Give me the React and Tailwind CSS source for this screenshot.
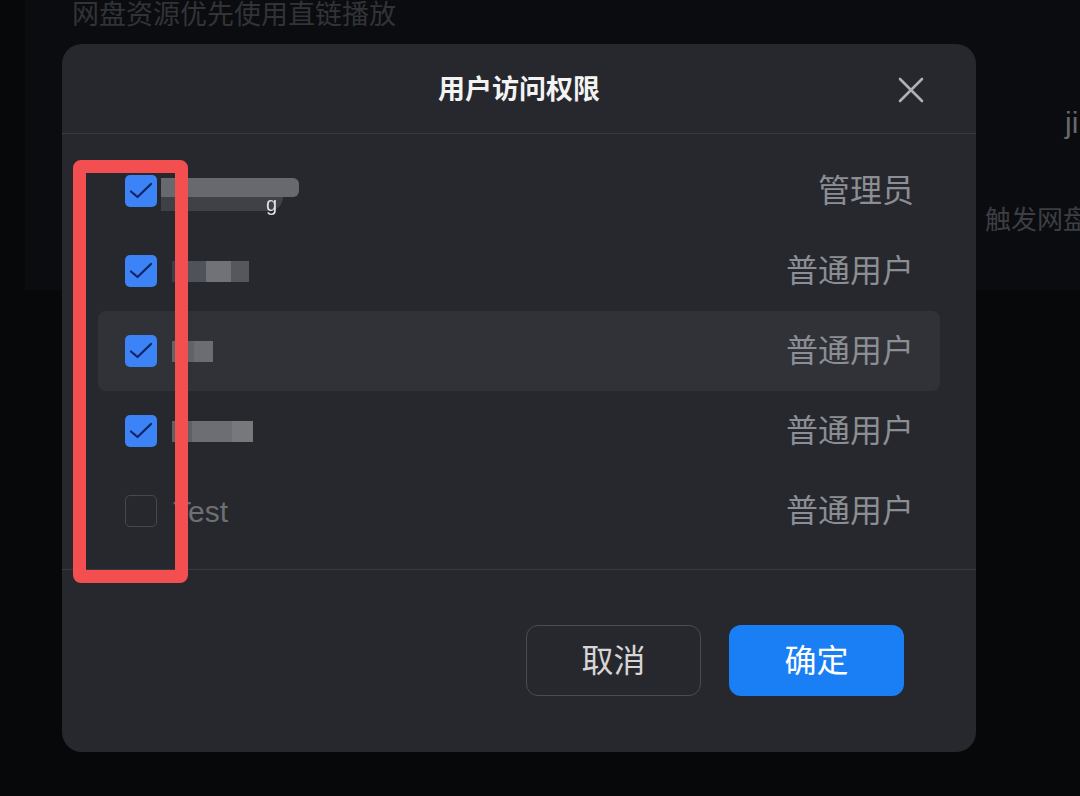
const USERS = [
  { id: 1, checked: true, role: '管理员', g: true },
  { id: 2, checked: true, role: '普通用户', blur: [['#3b3e4a', 14], ['#505259', 20], ['#707277', 25], ['#55575c', 18]] },
  { id: 3, checked: true, role: '普通用户', blur: [['#616368', 22], ['#6b6d72', 19]], active: true },
  { id: 4, checked: true, role: '普通用户', blur: [['#5e6065', 20], ['#6c6e73', 40], ['#76787c', 21]] },
  { id: 5, checked: false, role: '普通用户', name: 'Test' },
];

function Box({ checked }) {
  if (!checked) {
    return <div className="w-8 h-8 shrink-0 rounded-[5px] border-[1.5px] border-[#46484e]" />;
  }
  return (
    <div className="w-8 h-8 shrink-0 rounded-[5px] bg-[#3b83f6] flex items-center justify-center">
      <svg width="32" height="32" viewBox="0 0 32 32" fill="none">
        <path d="M6 16.5 12.5 22 26 9" stroke="#13235e" strokeWidth="2.2" strokeLinecap="round" strokeLinejoin="round" />
      </svg>
    </div>
  );
}

function Row({ u }) {
  return (
    <div className={`h-20 flex items-center pl-[27px] pr-[26px] rounded-lg ${u.active ? 'bg-[#303238]' : ''}`}>
      <Box checked={u.checked} />
      {u.name ? (
        <span className="ml-[16px] text-[30px] text-[#6c6f74]">{u.name}</span>
      ) : u.g ? (
        <div className="ml-[4px] mt-[6px] flex flex-col w-[138px] blur-[0.6px]">
          <div className="h-[19px] bg-[#67696e] rounded-r-md" />
          <div className="h-[14px] w-[122px] bg-[#3f4146] rounded-br-2xl flex justify-end items-end pr-[6px]">
            <span className="text-[20px] leading-none text-[#e0e0e0] -mb-[3px]">g</span>
          </div>
        </div>
      ) : (
        <div className="ml-[15px] flex h-[21px] blur-[0.4px]">
          {u.blur.map(([c, w], i) => (
            <div key={i} className="h-full" style={{ background: c, width: w }} />
          ))}
        </div>
      )}
      <span className="ml-auto text-[32px] text-[#8b8e93]">{u.role}</span>
    </div>
  );
}

export default function App() {
  return (
    <div className="relative w-[1080px] h-[796px] overflow-hidden bg-[#07080a] font-['Liberation_Sans','Noto_Sans_CJK_SC',sans-serif]">
      {/* page behind the mask */}
      <div className="ml-[25px] h-[290px] bg-[#0b0c0f] flex">
        <div className="pl-[47px] -mt-[5px] text-[27px] text-[#313337] whitespace-nowrap">网盘资源优先使用直链播放</div>
        <div className="ml-auto w-[95px] shrink-0 flex flex-col">
          <span className="mt-[100px] pl-[80px] text-[30px] text-[#66686d]">ji</span>
          <span className="mt-[56px] text-[26px] text-[#3c3e43] whitespace-nowrap">触发网盘</span>
        </div>
      </div>

      {/* dialog */}
      <div className="absolute left-[62px] top-[44px] w-[914px] h-[708px] rounded-[20px] bg-[#26282e] flex flex-col">
        <div className="relative h-[90px] shrink-0 flex items-center justify-center border-b border-[#383a40]">
          <span className="mt-[3px] text-[27px] font-bold text-[#f3f3f3]">用户访问权限</span>
          <button className="absolute right-[52px] top-[33px]">
            <svg width="26" height="26" viewBox="0 0 26 26" fill="none">
              <path d="M2 2 24 24M24 2 2 24" stroke="#adb0b5" strokeWidth="2.6" strokeLinecap="round" />
            </svg>
          </button>
        </div>
        <div className="px-[36px] pt-[17px] pb-[18px] border-b border-[#383a40]">
          {USERS.map((u) => (
            <Row key={u.id} u={u} />
          ))}
        </div>
        <div className="flex justify-end gap-[28px] pr-[72px] pt-[55px]">
          <button className="w-[175px] h-[71px] rounded-[12px] border border-[#4a4c52] text-[32px] text-[#d6d6d6]">取消</button>
          <button className="w-[175px] h-[71px] rounded-[12px] bg-[#1a7ff5] text-[32px] text-white">确定</button>
        </div>
      </div>

      {/* annotation */}
      <div className="absolute left-[73px] top-[160px] w-[115px] h-[423px] border-[13px] border-[#f44f50] rounded-[8px]" />
    </div>
  );
}
